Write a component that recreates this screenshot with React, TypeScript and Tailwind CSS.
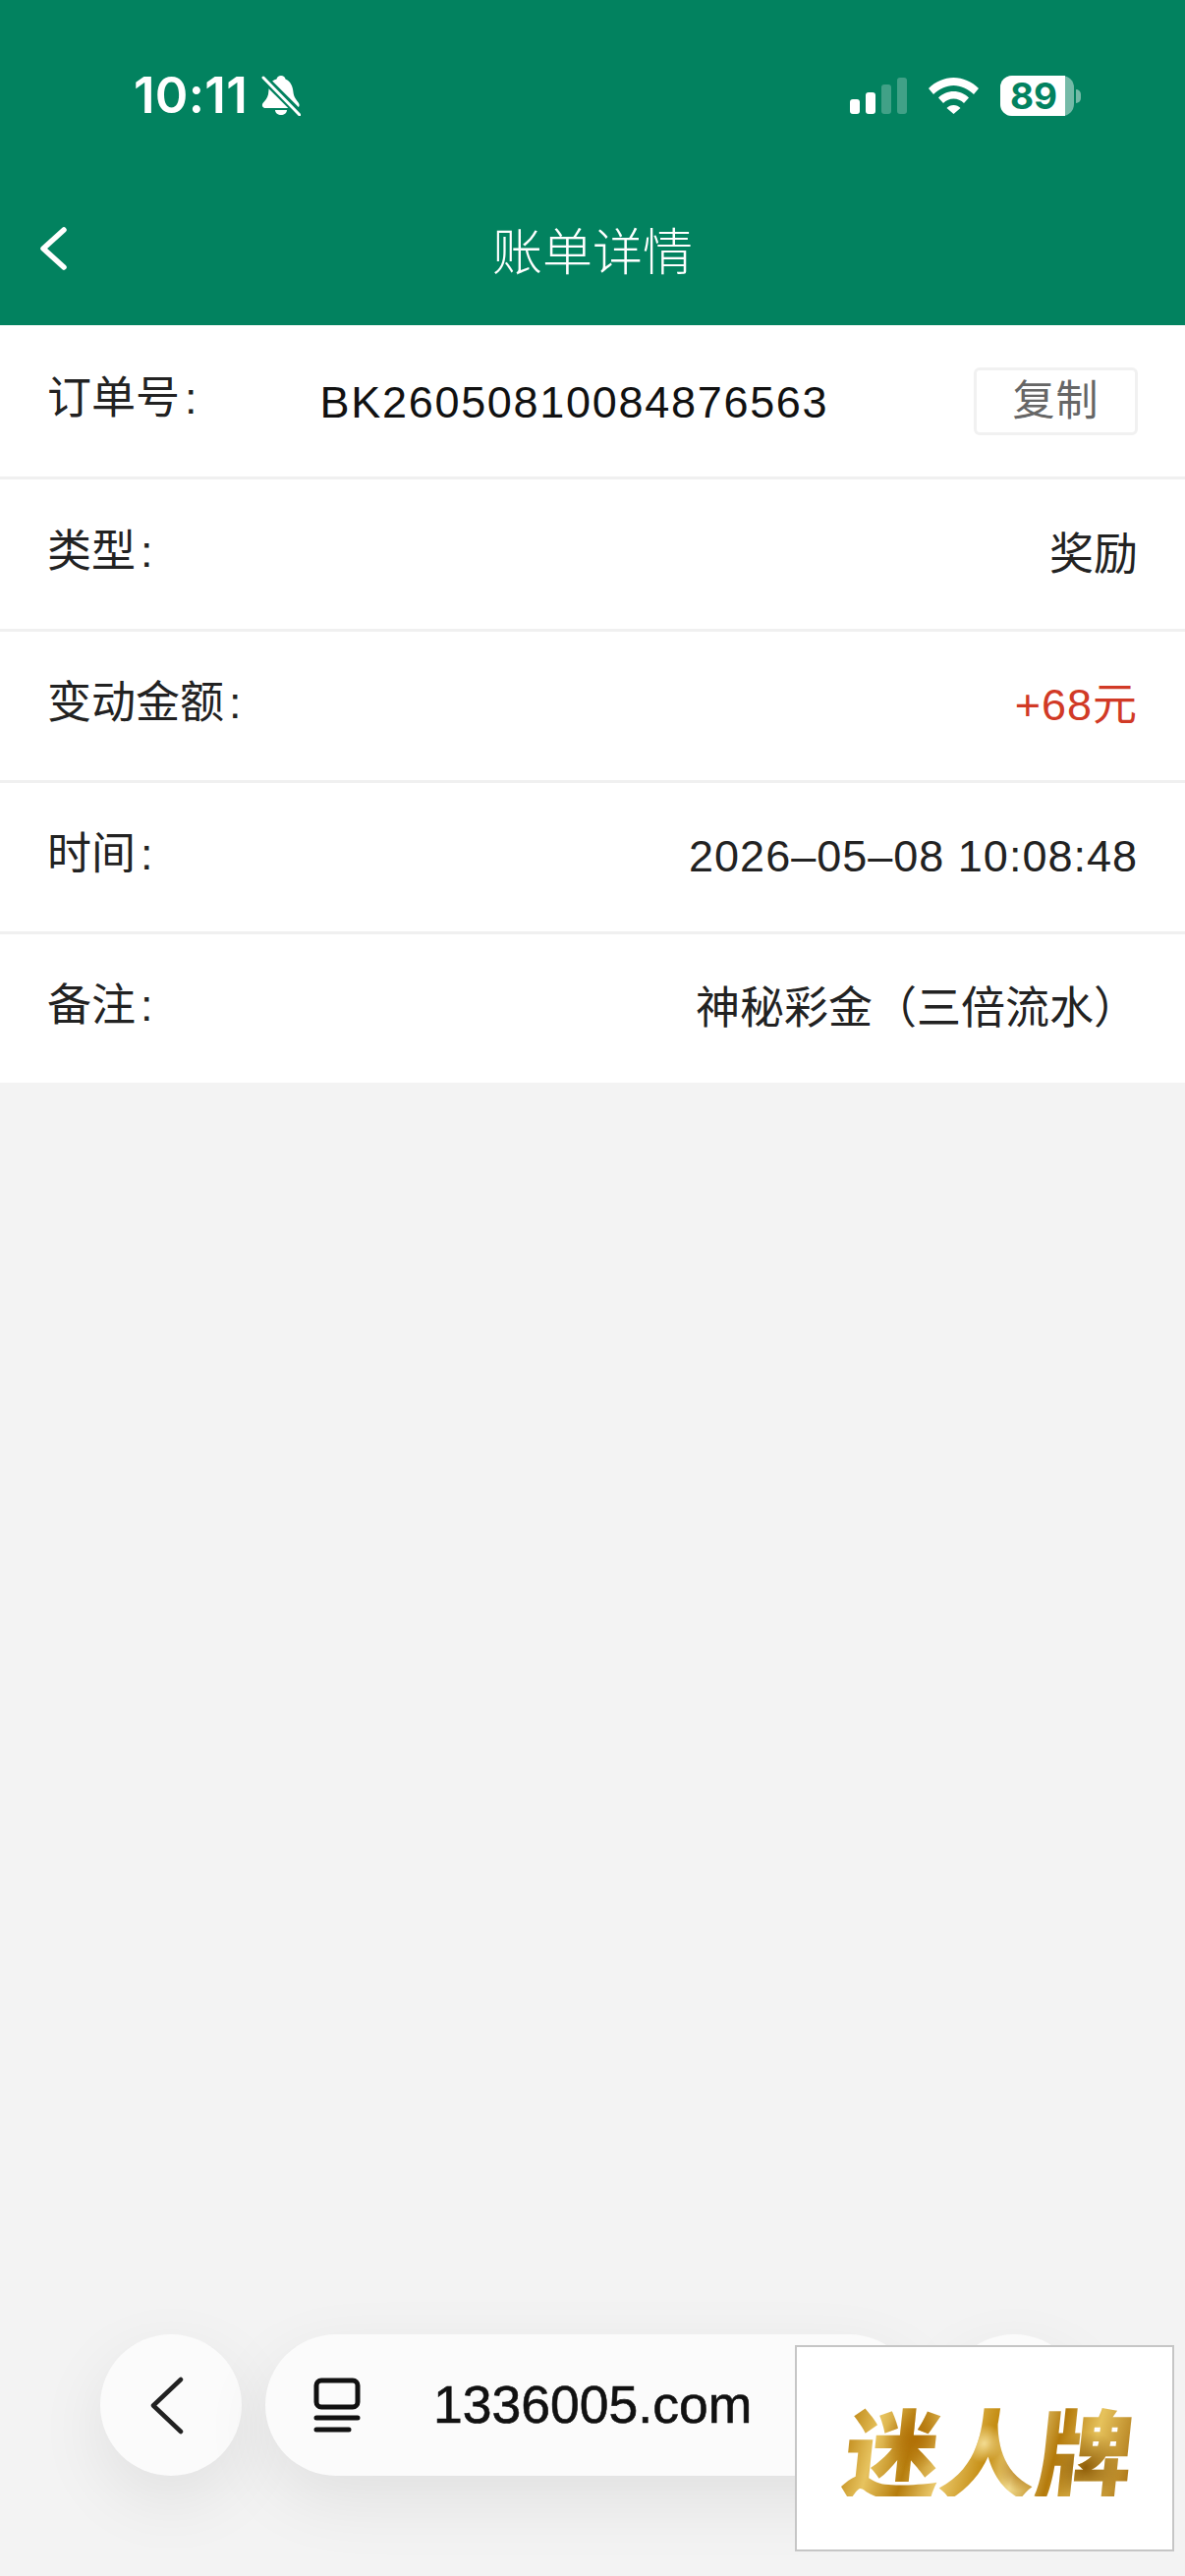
import { ReactNode } from 'react';

const CJK = "font-['Liberation_Sans','Noto_Sans_CJK_SC',sans-serif]";

export default function App() {
  return (
    <div className={`relative min-h-[2622px] w-[1206px] overflow-hidden bg-[#f3f3f3] ${CJK}`}>
      {/* Header */}
      <header className="h-[331px] bg-[#02825f] text-white">
        <StatusBar />
        <div className="relative mt-[85px] flex h-[90px] items-center justify-center">
          <svg className="absolute left-[40px] top-[16px] h-[50px] w-[30px]" viewBox="0 0 30 50" fill="none" stroke="currentColor" strokeWidth="5.5" strokeLinecap="round" strokeLinejoin="round">
            <path d="M25 6 L4 25 L25 44" />
          </svg>
          <h1 className="text-[51px] font-light leading-none">账单详情</h1>
        </div>
      </header>

      {/* Detail rows */}
      <div className="bg-white">
        <Row className="h-[157px]">
          <Label>订单号</Label>
          <span className="ml-[125px] mt-[2px] text-[45px] leading-none tracking-[1.7px] text-[#111]">BK26050810084876563</span>
          <button className="ml-auto flex h-[69px] w-[167px] items-center justify-center rounded-md border-[3px] border-[#f1f1f1] text-[43px] leading-none tracking-[1px] text-[#666]">复制</button>
        </Row>
        <Row className="h-[155px]"><Label>类型</Label><Value>奖励</Value></Row>
        <Row><Label>变动金额</Label><Value className="-mt-[2px] tracking-[1px] text-[#d13a26]">+68元</Value></Row>
        <Row><Label>时间</Label><Value className="-mt-[3px] tracking-[1px] text-[#222]">2026–05–08 10:08:48</Value></Row>
        <Row className="h-[151px]"><Label>备注</Label><Value>神秘彩金（三倍流水）</Value></Row>
      </div>

      {/* Browser bar floating over the page */}
      <nav className="absolute bottom-[102px] left-[102px] flex gap-6">
        <div className="flex h-[144px] w-[144px] items-center justify-center rounded-full bg-[#fbfbfb] shadow-[0_24px_70px_rgba(0,0,0,0.08)]">
          <svg className="mr-[8px] h-[59px] w-[36px]" viewBox="0 0 36 59" fill="none" stroke="#222" strokeWidth="4.5" strokeLinecap="round" strokeLinejoin="round">
            <path d="M32 3 L4 29.5 L32 56" />
          </svg>
        </div>
        <div className="flex h-[144px] w-[666px] items-center rounded-[72px] bg-[#fbfbfb] pl-[49px] shadow-[0_24px_70px_rgba(0,0,0,0.08)]">
          <svg className="h-[56px] w-[48px]" viewBox="0 0 48 56" fill="none" stroke="#111" strokeWidth="5" strokeLinecap="round">
            <rect x="3" y="3" width="42" height="27" rx="5" />
            <path d="M3 41 H45 M3 53 H36" />
          </svg>
          <span className="ml-[74px] text-[53.5px] leading-none text-[#111] [-webkit-text-stroke:0.6px_#111]">1336005.com</span>
        </div>
        <div className="h-[144px] w-[144px] rounded-full bg-[#fbfbfb] shadow-[0_24px_70px_rgba(0,0,0,0.08)]" />
      </nav>

      {/* Logo ad */}
      <div className="absolute left-[809px] top-[2387px] flex h-[210px] w-[386px] items-center justify-center border-2 border-[#c6c6c6] bg-white pl-[10px]">
        <span className="-skew-x-6 bg-[radial-gradient(circle_at_24%_40%,#b06f06_0,transparent_14%),radial-gradient(circle_at_48%_45%,#f3dc92_0,transparent_12%),radial-gradient(circle_at_62%_70%,#a96c08_0,transparent_12%),radial-gradient(circle_at_84%_70%,#8f5d08_0,transparent_14%),linear-gradient(100deg,#b97f0c_0%,#e7c35f_12%,#b67d0d_24%,#eccb6f_36%,#c48c12_50%,#f0d98c_60%,#b47a0b_72%,#e6c25c_84%,#a87010_100%)] bg-clip-text text-[98px] font-black leading-none text-transparent [font-family:'Noto_Sans_CJK_SC',sans-serif]">迷人牌</span>
      </div>
    </div>
  );
}

function Row({ children, className = 'h-[154px]' }: { children: ReactNode; className?: string }) {
  return (
    <div className={`flex items-center border-b-[3px] border-[#f0f0f0] px-[48px] last:border-b-0 ${className}`}>
      {children}
    </div>
  );
}

function Label({ children }: { children: ReactNode }) {
  return (
    <span className="-mt-[6px] text-[45px] leading-none text-[#222]">
      {children}<span className="ml-[5px]">:</span>
    </span>
  );
}

function Value({ children, className = 'text-[#222]' }: { children: ReactNode; className?: string }) {
  return <span className={`ml-auto text-[45px] leading-none ${className}`}>{children}</span>;
}

function StatusBar() {
  return (
    <div className="flex h-[127px] items-start pt-[71px]">
      <span className="ml-[136px] text-[51px] font-semibold leading-[52px] tracking-[0.3px] [font-family:Inter,sans-serif]">10:11</span>
      <svg className="ml-[14px] mt-[5px] h-[42px] w-[40px]" viewBox="0 0 40 42" fill="white">
        <path d="M20 1C22.500 1 24 2.500 24.500 4.500C30 7 32 12 32.500 18C33 23 36 26 38 29C39.500 31.500 38 34 35.500 34L4 34C1.500 34 0 31.500 1.500 29C4 26 6 24 7 20C7.500 17 7.500 13 8.500 10C9.500 7 12.500 5.500 15.500 4.500C16 2.500 17.500 1 20 1Z" />
        <path d="M14 36H26C26 39 23 41 20 41S14 39 14 36Z" />
        <path d="M1 2 L40 41" stroke="#02825f" strokeWidth="8" />
        <path d="M2 3 L39 41" stroke="white" strokeWidth="3" strokeLinecap="round" />
      </svg>
      {/* signal */}
      <div className="ml-auto mt-[8px] flex h-[37px] items-end gap-[6px]">
        <div className="h-[15px] w-[10px] rounded-[3px] bg-white" />
        <div className="h-[22px] w-[10px] rounded-[3px] bg-white" />
        <div className="h-[30px] w-[10px] rounded-[3px] bg-white/25" />
        <div className="h-[37px] w-[10px] rounded-[3px] bg-white/25" />
      </div>
      <svg className="ml-[22px] mt-[8px] h-[37px] w-[51px]" viewBox="0 0 51 37" fill="white">
        <path d="M25.500 0C35 0 44 4 51 11l-5 6C40 11.500 33 8 25.500 8S11 11.500 5 17l-5-6C7 4 16 0 25.500 0z" />
        <path d="M25.500 14c6 0 11.500 2.500 15.500 6.500l-5 5.500c-3-3-6.500-4.500-10.500-4.500S18 23 15 26l-5-5.500C14 16.500 19.500 14 25.500 14z" />
        <path d="M25.500 28c3 0 5 1 7 3l-7 6-7-6c2-2 4-3 7-3z" />
      </svg>
      <div className="ml-[22px] mr-[106px] mt-[6px] flex items-center">
        <div className="h-[41px] w-[75px] rounded-[12px] bg-white/45">
          <div className="flex h-full w-[66px] items-center justify-center rounded-l-[12px] bg-white pl-[2px] text-[37px] font-bold leading-none text-[#02825f] [font-family:Inter,sans-serif]">89</div>
        </div>
        <div className="ml-[2px] h-[14px] w-[5px] rounded-r-full bg-white/45" />
      </div>
    </div>
  );
}
